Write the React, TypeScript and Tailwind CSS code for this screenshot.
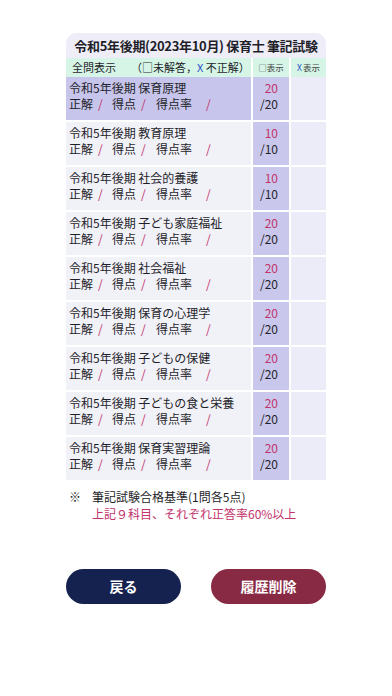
import React from 'react';

const subjects = [
  { name: '保育原理', total: 20, active: true },
  { name: '教育原理', total: 10 },
  { name: '社会的養護', total: 10 },
  { name: '子ども家庭福祉', total: 20 },
  { name: '社会福祉', total: 20 },
  { name: '保育の心理学', total: 20 },
  { name: '子どもの保健', total: 20 },
  { name: '子どもの食と栄養', total: 20 },
  { name: '保育実習理論', total: 20 },
];

const font = { fontFamily: '"Noto Sans CJK JP", "Noto Sans", sans-serif' };

const Slash = () => <span className="text-[#c2336b]">/</span>;

const App: React.FC = () => {
  return (
    <div className="min-h-screen w-full bg-white text-[#1f1f2a]" style={font}>
      <div className="mx-auto w-[260px] pt-[33px]">
        {/* Title */}
        <div className="flex h-[25px] items-center justify-center whitespace-nowrap rounded-t-[10px] bg-[#efeef8] text-[13px] font-bold tracking-tight">
          令和5年後期(2023年10月) 保育士 筆記試験
        </div>

        {/* Filter row */}
        <div className="grid h-[19px] grid-cols-[185px_36px_35px] gap-x-[2px] whitespace-nowrap">
          <div className="flex items-center bg-[#d6f5e7] pl-[6px] text-[11px] leading-[19px]">
            <span className="shrink-0">全問表示</span>
            <span className="ml-[15px] shrink-0">（□未解答，<span className="text-[#2b4fc4]">X</span> 不正解）</span>
          </div>
          <div className="flex items-center justify-center bg-[#d6f5e7] text-[8.5px] leading-[19px] text-[#444]">□表示</div>
          <div className="flex items-center justify-center bg-[#d6f5e7] text-[8.5px] leading-[19px]">
            <span className="text-[#2b4fc4]">X</span>
            <span className="ml-[1px] text-[#444]">表示</span>
          </div>
        </div>

        {/* Rows */}
        <div className="flex flex-col gap-[2px]">
          {subjects.map((s) => (
            <div key={s.name} className="grid h-[43px] grid-cols-[185px_36px_35px] gap-x-[2px]">
              <div
                className={`flex flex-col whitespace-nowrap pl-[3px] pt-[3px] text-[12px] leading-[16px] ${
                  s.active ? 'bg-[#c7c5eb]' : 'bg-[#f1f1f8]'
                }`}
              >
                <div>令和5年後期 {s.name}</div>
                <div className="flex">
                  <span className="w-[29px]">正解</span>
                  <span className="w-[14px]"><Slash /></span>
                  <span className="w-[29px]">得点</span>
                  <span className="w-[15px]"><Slash /></span>
                  <span className="w-[50px]">得点率</span>
                  <Slash />
                </div>
              </div>
              <div className="bg-[#c9c7eb] pr-[11px] pt-[3px] text-right text-[12px] leading-[16px]">
                <div className="text-[#c2336b]">{s.total}</div>
                <div>/{s.total}</div>
              </div>
              <div className="bg-[#ecebf8]" />
            </div>
          ))}
        </div>

        {/* Note */}
        <div className="mt-[8px] flex text-[12px] leading-[17px]">
          <span className="ml-[3px] w-[23px]">※</span>
          <div>
            <div>筆記試験合格基準(1問各5点)</div>
            <div className="text-[#c2336b]">上記９科目、それぞれ正答率60%以上</div>
          </div>
        </div>

        {/* Buttons */}
        <div className="mt-[47px] flex justify-between">
          <button className="h-[35px] w-[115px] rounded-full bg-[#15224f] text-[14px] font-bold text-white">
            戻る
          </button>
          <button className="h-[35px] w-[115px] rounded-full bg-[#892a44] text-[14px] font-bold text-white">
            履歴削除
          </button>
        </div>
      </div>
    </div>
  );
};

export default App;
